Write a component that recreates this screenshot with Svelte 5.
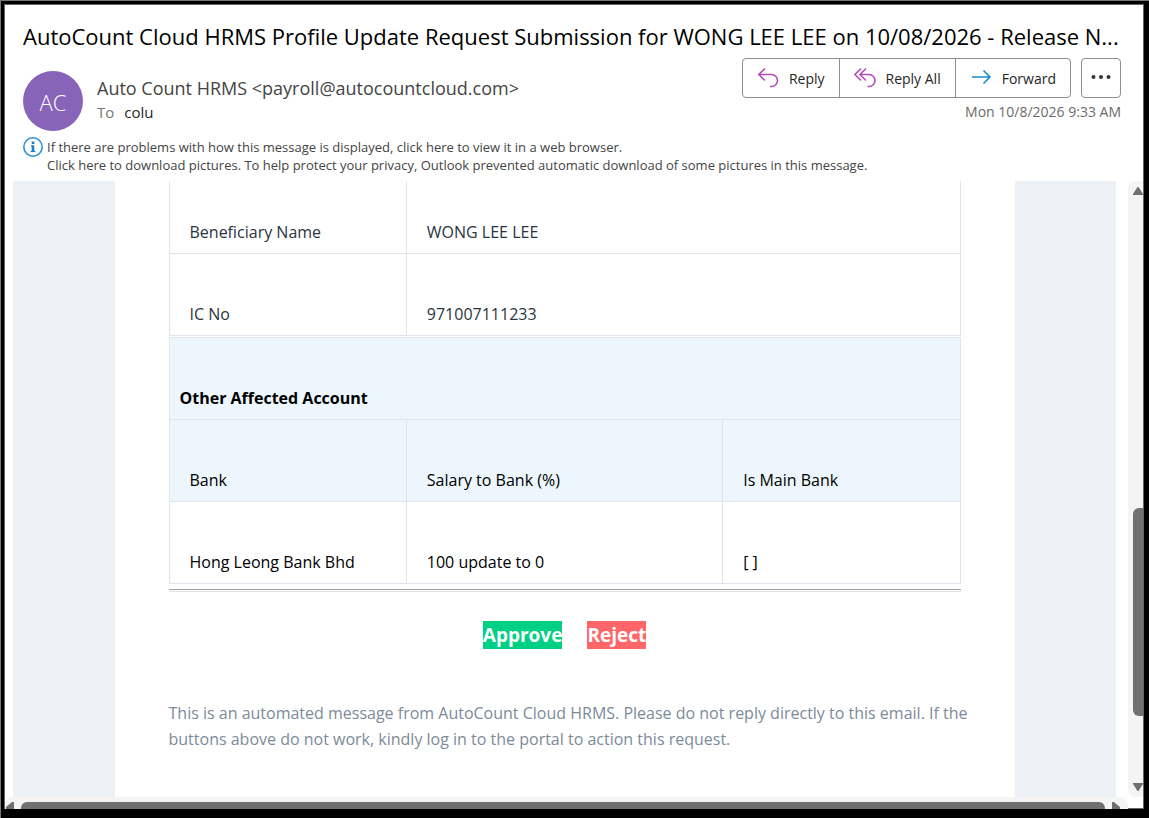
<script lang="ts">
    const subject = 'AutoCount Cloud HRMS Profile Update Request Submission for WONG LEE LEE on 10/08/2026 - Release N...';

    let details = [
        { label: 'Beneficiary Name', value: 'WONG LEE LEE' },
        { label: 'IC No', value: '971007111233' }
    ];

    let accounts = [
        { bank: 'Hong Leong Bank Bhd', salary: '100 update to 0', main: '[ ]' }
    ];
</script>

<div class="window">
    <header class="header">
        <h1 class="subject">{subject}</h1>
        <div class="meta">
            <div class="avatar">AC</div>
            <div class="people">
                <div class="from">Auto Count HRMS &lt;payroll@autocountcloud.com&gt;</div>
                <div class="to"><span class="to-label">To</span> <span>colu</span></div>
            </div>
            <div class="side">
                <div class="actions">
                    <div class="group">
                        <button class="action">
                            <svg width="22" height="22" viewBox="0 0 22 22" fill="none" stroke="#b14fb8" stroke-width="1.6">
                                <path d="M8 1.5 1.8 7.5 8 13.5M2 7.5h12.5a6 6 0 0 1 0 12H13" />
                            </svg>
                            Reply
                        </button>
                        <button class="action">
                            <svg width="22" height="22" viewBox="0 0 22 22" fill="none" stroke="#b14fb8" stroke-width="1.6">
                                <path d="M7 1.5 1 7.5 7 13.5M12 1.5 6 7.5 12 13.5M6 7.5h9a6 6 0 0 1 0 12H13.5" />
                            </svg>
                            Reply All
                        </button>
                        <button class="action">
                            <svg width="22" height="22" viewBox="0 0 22 22" fill="none" stroke="#1e8bcd" stroke-width="1.6">
                                <path d="M2 10h18M13.5 3.5 20 10l-6.5 6.5" />
                            </svg>
                            Forward
                        </button>
                    </div>
                    <button class="more" aria-label="More actions">
                        <svg width="20" height="8" viewBox="0 0 20 8" fill="#333">
                            <circle cx="2.5" cy="2" r="2" />
                            <circle cx="10" cy="2" r="2" />
                            <circle cx="17.5" cy="2" r="2" />
                        </svg>
                    </button>
                </div>
                <time class="date">Mon 10/8/2026 9:33 AM</time>
            </div>
        </div>
        <div class="info">
            <svg width="20" height="20" viewBox="0 0 20 20">
                <circle cx="10" cy="10" r="9.2" fill="#fff" stroke="#2a8dd0" stroke-width="1.5" />
                <path d="M8.7 4.5h2.6v2.4H8.7zM8 8.2h3.3v5.6h1V15H7.7v-1.2h1V9.4H8z" fill="#1a80c8" />
            </svg>
            <div class="info-lines">
                <button class="info-line">If there are problems with how this message is displayed, click here to view it in a web browser.</button>
                <button class="info-line">Click here to download pictures. To help protect your privacy, Outlook prevented automatic download of some pictures in this message.</button>
            </div>
        </div>
    </header>

    <div class="pane">
        <div class="canvas">
            <main class="card">
                <table class="details">
                    <colgroup>
                        <col class="narrow" />
                        <col />
                    </colgroup>
                    <tbody>
                        {#each details as row}
                            <tr>
                                <th scope="row">{row.label}</th>
                                <td>{row.value}</td>
                            </tr>
                        {/each}
                    </tbody>
                </table>
                <table class="accounts">
                    <colgroup>
                        <col class="narrow" />
                        <col class="wide" />
                        <col />
                    </colgroup>
                    <thead>
                        <tr>
                            <th class="section" colspan="3">Other Affected Account</th>
                        </tr>
                        <tr>
                            <th>Bank</th>
                            <th>Salary to Bank (%)</th>
                            <th>Is Main Bank</th>
                        </tr>
                    </thead>
                    <tbody>
                        {#each accounts as account}
                            <tr>
                                <td>{account.bank}</td>
                                <td>{account.salary}</td>
                                <td>{account.main}</td>
                            </tr>
                        {/each}
                    </tbody>
                </table>
                <hr />
                <div class="links">
                    <a class="approve" href="#approve">Approve</a>
                    <a class="reject" href="#reject">Reject</a>
                </div>
                <p class="note">
                    This is an automated message from AutoCount Cloud HRMS. Please do not reply directly to this email. If the buttons above do not work, kindly log in to the portal to action this request.
                </p>
            </main>
        </div>
        <div class="v-scroll">
            <svg width="10" height="8" viewBox="0 0 10 8" fill="#707070"><path d="M0 8V7L4.5 0h1L10 7v1z" /></svg>
            <div class="v-track"><div class="v-thumb"></div></div>
            <svg width="10" height="8" viewBox="0 0 10 8" fill="#707070"><path d="M0 0h10v1L5.5 8h-1L0 1z" /></svg>
        </div>
    </div>
    <div class="h-scroll">
        <svg width="10" height="10" viewBox="0 0 10 10" fill="#707070"><path d="M9 0v10H1V5L7 0z" /></svg>
        <div class="h-thumb"></div>
        <svg width="10" height="10" viewBox="0 0 10 10" fill="#707070"><path d="M1 0v10h8V5L3 0z" /></svg>
    </div>
</div>

<style>
    :global(body) {
        background: #000;
    }

    :global(#app) {
        border: solid #777;
        border-width: 1px 0 0 1px;
    }

    .window {
        box-sizing: border-box;
        min-height: calc(100vh - 1px);
        display: flex;
        flex-direction: column;
        padding: 1px 1px 0;
        border: solid #000;
        border-width: 3px 5px 9px 3px;
        box-shadow: inset 0 0 0 1px #666;
        background: #fff;
        font-family: "Open Sans", "Noto Sans", sans-serif;
        color: #262626;
    }

    button {
        font-family: inherit;
        color: inherit;
        background: none;
        border: none;
        padding: 0;
        cursor: pointer;
    }

    .header {
        padding: 14px 22px 7px 18px;
    }

    .subject {
        margin: 0;
        font-size: 22px;
        font-weight: 400;
        line-height: 34px;
        color: #000;
        white-space: nowrap;
    }

    .meta {
        display: flex;
        align-items: flex-start;
        padding-top: 5px;
    }

    .avatar {
        width: 60px;
        height: 60px;
        margin: 13px 14px 0 0;
        border-radius: 50%;
        background: #8764b8;
        color: #fff;
        font-size: 22px;
        font-weight: 300;
        line-height: 62px;
        text-align: center;
    }

    .people {
        flex: 1;
        padding-top: 17px;
        white-space: nowrap;
    }

    .from {
        font-size: 18px;
        line-height: 26px;
        color: #444;
    }

    .to {
        font-size: 15px;
        line-height: 22px;
    }

    .to-label {
        margin-right: 6px;
        color: #767676;
    }

    .side {
        display: flex;
        flex-direction: column;
        align-items: flex-end;
    }

    .actions {
        display: flex;
        gap: 10px;
    }

    .group {
        display: flex;
        border: 1px solid #8f8f8f;
        border-radius: 4px;
    }

    .action {
        display: flex;
        align-items: center;
        gap: 10px;
        height: 38px;
        padding: 0 14px;
        font-size: 14px;
    }

    .action + .action {
        border-left: 1px solid #8f8f8f;
    }

    .more {
        width: 40px;
        height: 40px;
        border: 1px solid #8f8f8f;
        border-radius: 4px;
    }

    .date {
        padding-top: 3px;
        font-size: 14px;
        line-height: 22px;
        color: #6b6b6b;
    }

    .info {
        display: flex;
        gap: 4px;
        padding-top: 6px;
    }

    .info-lines {
        display: flex;
        flex-direction: column;
        align-items: flex-start;
        padding-top: 1px;
    }

    .info-line {
        font-size: 13px;
        line-height: 18px;
        color: #444;
        white-space: nowrap;
    }

    .pane {
        flex: 1;
        display: flex;
    }

    .canvas {
        flex: 1;
        margin: 0 12px 0 8px;
        background: #edf0f5;
    }

    .card {
        box-sizing: border-box;
        max-width: 900px;
        height: 100%;
        margin: 0 auto;
        padding: 0 54px;
        background: #fff;
    }

    table {
        width: 100%;
        table-layout: fixed;
        border-collapse: collapse;
        font-size: 16px;
        line-height: 26px;
        color: #000;
    }

    th,
    td {
        box-sizing: border-box;
        height: 82px;
        padding: 0 20px 8px;
        border: 1px solid #dfe5ec;
        font-weight: 400;
        text-align: left;
        vertical-align: bottom;
    }

    .details {
        margin-bottom: 1px;
        color: #2b3440;
    }

    .details tr:first-child th,
    .details tr:first-child td {
        height: 72px;
        border-top: none;
    }

    .accounts thead {
        background: #edf6fd;
    }

    .accounts .section {
        padding-left: 10px;
        font-weight: 700;
    }

    .narrow {
        width: 30%;
    }

    .wide {
        width: 40%;
    }

    hr {
        height: 1px;
        margin: 5px 0 0;
        border: solid #a0a0a0;
        border-width: 1px 0;
        border-bottom-color: #e3e3e3;
    }

    .links {
        display: flex;
        justify-content: center;
        gap: 25px;
        padding: 29px 0 51px;
        font-size: 19px;
        font-weight: 700;
        line-height: 28px;
    }

    .links a {
        color: #fff;
        text-decoration: none;
    }

    .approve {
        background: #00d084;
    }

    .reject {
        background: #ff6669;
    }

    .note {
        margin: 0 -16px 0 0;
        padding-bottom: 44px;
        font-size: 16px;
        line-height: 26px;
        color: #7d8a9a;
    }

    .v-scroll {
        box-sizing: border-box;
        width: 15px;
        display: flex;
        flex-direction: column;
        align-items: flex-end;
        padding: 6px 0;
        border-radius: 8px 0 0 8px;
        background: #f4f4f4;
    }

    .v-track {
        flex: 1;
        display: flex;
        flex-direction: column;
        justify-content: flex-end;
        padding-bottom: 67px;
    }

    .v-thumb {
        width: 10px;
        height: 40%;
        border-radius: 6px 0 0 6px;
        background: #707070;
    }

    .h-scroll {
        box-sizing: border-box;
        display: flex;
        align-items: flex-start;
        gap: 6px;
        height: 12px;
        margin-right: 15px;
        padding: 5px 7px 0 0;
        border-radius: 8px 8px 0 0;
        background: #f4f4f4;
        overflow: hidden;
    }

    .h-thumb {
        flex: 1;
        height: 12px;
        border-radius: 6px;
        background: #707070;
    }
</style>
